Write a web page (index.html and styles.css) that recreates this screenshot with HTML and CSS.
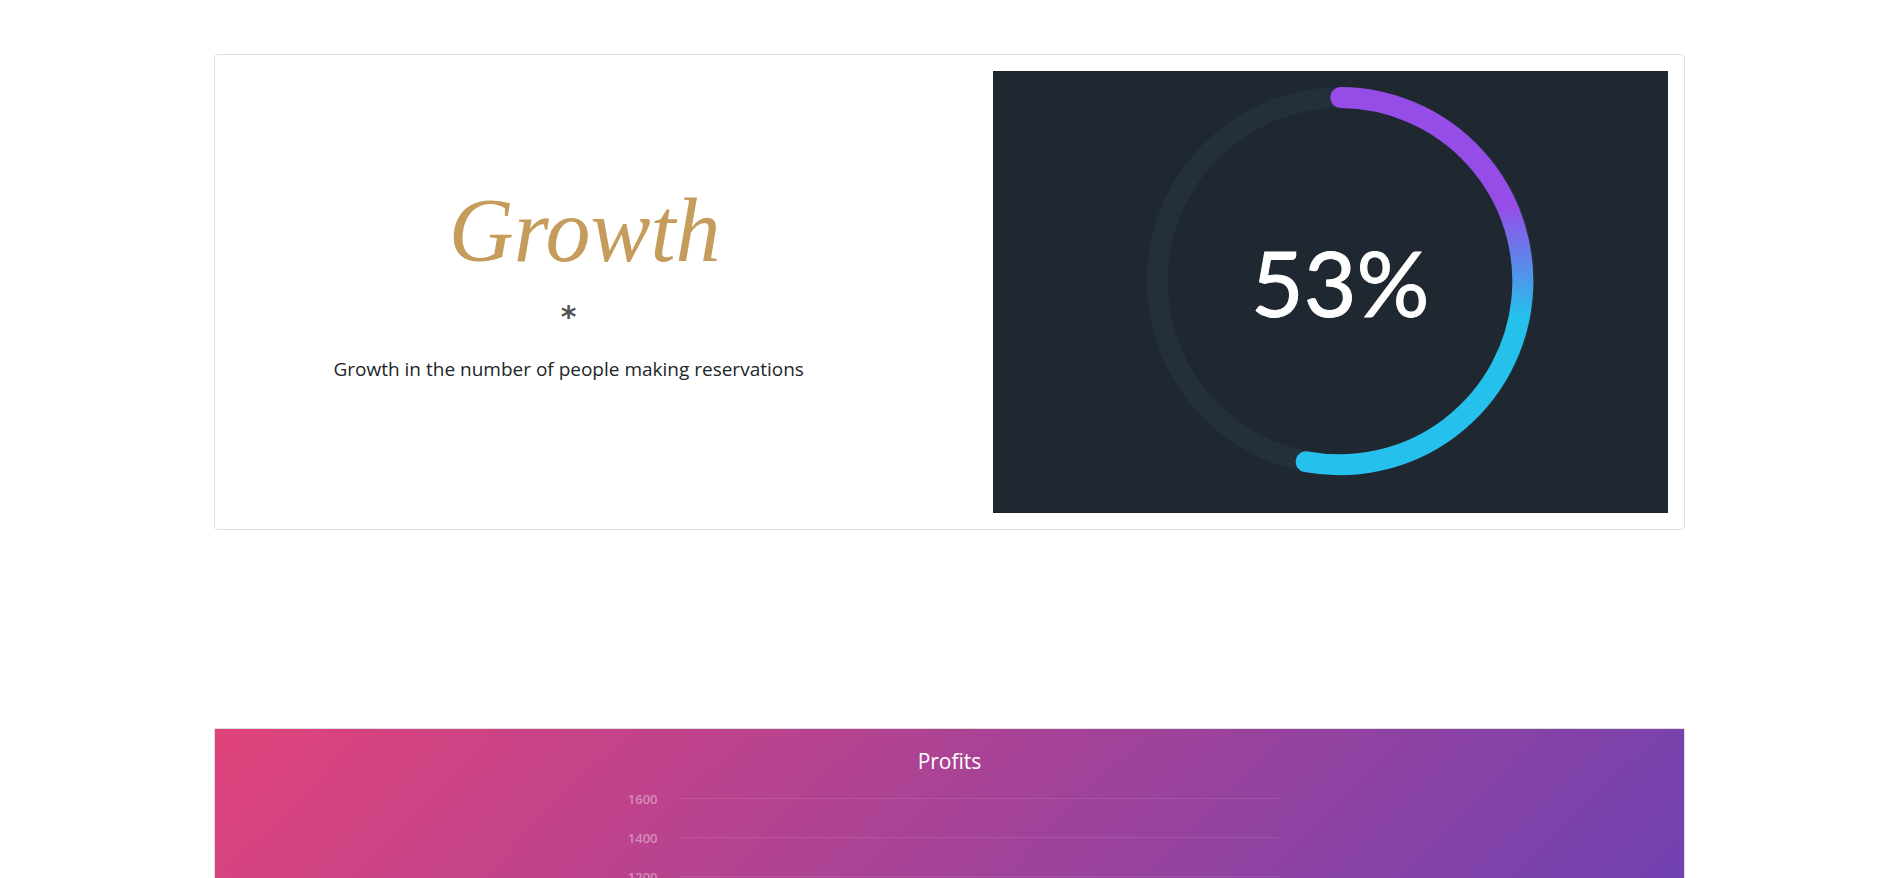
FILE: index.html
```html
<!DOCTYPE html>
<html lang="en">
<head>
<meta charset="utf-8">
<title>Reservations dashboard</title>
<meta name="viewport" content="width=device-width, initial-scale=1">
<link rel="stylesheet" href="styles.css">
</head>
<body>
<main class="page">
  <section class="card growth">
    <div class="growth-text">
      <h1 class="growth-title">Growth</h1>
      <div class="ornament">*</div>
      <p class="growth-note">Growth in the number of people making reservations</p>
    </div>
    <svg class="dial" viewBox="0 0 675 442" role="img" aria-label="53 percent">
      <defs>
        <linearGradient id="arc" gradientUnits="userSpaceOnUse" x1="0" y1="135" x2="0" y2="245">
          <stop offset="0" stop-color="#964de8"/>
          <stop offset="1" stop-color="#25c0ec"/>
        </linearGradient>
      </defs>
      <rect width="675" height="442" fill="#1f2730"/>
      <circle cx="347.5" cy="210" r="183.5" fill="none" stroke="#243039" stroke-width="21"/>
      <path d="M347.5 26.5A183.5 183.5 0 1 1 313 390.5" fill="none" stroke="url(#arc)" stroke-width="21" stroke-linecap="round"/>
      <text class="dial-value" x="347" y="246" text-anchor="middle">53%</text>
    </svg>
  </section>
  <section class="card profits">
    <h2 class="profits-title">Profits</h2>
    <div class="chart">
      <div class="tick"><span>1600</span></div>
      <div class="tick"><span>1400</span></div>
      <div class="tick"><span>1200</span></div>
    </div>
  </section>
</main>
</body>
</html>
```
FILE: styles.css
```css
* { box-sizing: border-box; }
html { overflow: hidden; }
body {
  margin: 0;
  background: #fff;
  color: #212529;
  font-family: "Open Sans", "Noto Sans", sans-serif;
}
.page {
  display: grid;
  gap: 198px;
  padding: 54px 197px 54px 214px;
}
.card {
  border: 1px solid #dfdfdf;
  border-radius: 4px;
}
.growth {
  display: grid;
  grid-template-columns: 47fr 47fr;
  column-gap: 6%;
  padding: 16px;
}
.growth-text {
  padding-top: 96px;
  text-align: center;
}
.growth-title {
  margin: 0;
  padding-left: 32px;
  color: #c69c5d;
  font: italic 400 90px/128px "Liberation Serif", serif;
}
.ornament {
  color: #555;
  font-family: "DejaVu Sans", sans-serif;
  font-size: 30px;
  font-weight: 700;
  line-height: 44px;
}
.growth-note {
  margin: 15px 0 0;
  font-size: 19px;
  line-height: 30px;
}
.dial {
  display: block;
  width: 100%;
}
.dial-value {
  fill: #fff;
  stroke: #fff;
  stroke-width: 1px;
  font-family: Lato, sans-serif;
  font-size: 91px;
}
.profits {
  min-height: 440px;
  padding: 16px 0 24px;
  border-radius: 1px;
  background: linear-gradient(135deg, #e0437b, #6a42b4 90%);
}
.profits-title {
  margin: 0;
  color: #fff;
  font-size: 21px;
  font-weight: 400;
  line-height: 32px;
  text-align: center;
}
.chart {
  width: 656px;
  margin: 2px auto 0;
}
.tick {
  display: grid;
  grid-template-columns: 36px 1fr;
  column-gap: 20px;
  align-items: center;
  height: 39px;
  color: rgba(255, 255, 255, 0.4);
  font-size: 13px;
  font-weight: 600;
  text-align: right;
}
.tick::after {
  height: 1px;
  background: rgba(255, 255, 255, 0.1);
  content: "";
}
```
